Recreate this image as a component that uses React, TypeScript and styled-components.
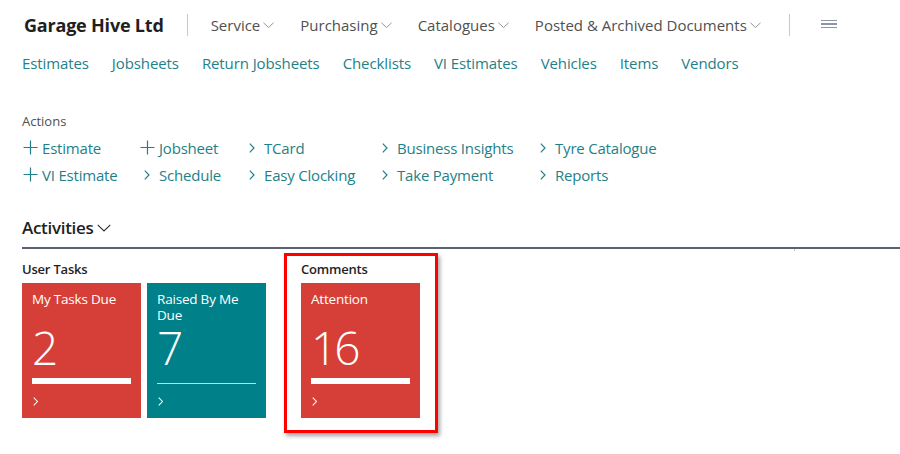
import React from "react";
import styled, { createGlobalStyle } from "styled-components";

const GlobalStyle = createGlobalStyle`
  html, body { margin: 0; padding: 0; background: #ffffff; }
  body { font-family: "Open Sans", "Noto Sans", "Liberation Sans", sans-serif; color: #212121; }
  * { box-sizing: border-box; }
`;

const TEAL = "#1e8189";
const RED_TILE = "#d63f37";
const TEAL_TILE = "#008089";

const Page = styled.div`
  width: 900px;
  height: 454px;
  overflow: hidden;
  padding-left: 22px;
`;

const TopBar = styled.header`
  height: 50px;
  display: flex;
  align-items: center;
`;

const Brand = styled.div`
  font-size: 18px;
  font-weight: 700;
  color: #1f1f1f;
  margin-left: 2px;
  letter-spacing: -0.2px;
`;

const VDivider = styled.div<{ $gapL: number; $gapR: number }>`
  width: 1px;
  height: 22px;
  background: #c9c9c9;
  margin-left: ${(p) => p.$gapL}px;
  margin-right: ${(p) => p.$gapR}px;
`;

const Menu = styled.nav`
  display: flex;
  align-items: center;
  gap: 26px;
`;

const MenuItem = styled.div`
  display: flex;
  align-items: center;
  gap: 3px;
  font-size: 15px;
  color: #505050;
`;

const Hamburger = styled.div`
  display: flex;
  flex-direction: column;
  gap: 2px;
  width: 16px;
  margin-top: -2px;
  span {
    display: block;
    height: 1.5px;
    background: #8c96a8;
  }
`;

const LinkRow = styled.nav`
  display: flex;
  gap: 23px;
  height: 26px;
  align-items: center;
`;

const Link = styled.a`
  font-size: 15px;
  color: ${TEAL};
  text-decoration: none;
  letter-spacing: -0.1px;
`;

const ActionsSection = styled.section`
  margin-top: 36px;
`;

const SmallLabel = styled.div`
  font-size: 13px;
  line-height: 18px;
  color: #505050;
`;

const ActionGrid = styled.div`
  margin-top: 4px;
  display: grid;
  grid-template-columns: 117px 105px 133px 158px auto;
  grid-auto-flow: column;
  grid-template-rows: 27px 27px;
`;

const Action = styled.a`
  display: flex;
  align-items: center;
  gap: 4px;
  font-size: 15px;
  color: ${TEAL};
  text-decoration: none;
  letter-spacing: -0.2px;
  white-space: nowrap;
`;

const IconBox = styled.span`
  width: 16px;
  display: inline-flex;
  justify-content: center;
  align-items: center;
`;

const ActivitiesHeader = styled.div`
  margin-top: 28px;
  display: flex;
  align-items: center;
  gap: 3px;
  font-size: 17px;
  line-height: 24px;
  font-weight: 600;
  color: #1f1f1f;
  height: 24px;
  letter-spacing: -0.3px;
`;

const Rule = styled.div`
  margin-top: 7px;
  height: 2px;
  background: #5b6373;
  position: relative;
`;

const Tick = styled.span`
  position: absolute;
  left: 772px;
  top: 2px;
  width: 1px;
  height: 2px;
  background: #c4c4c4;
`;

const GroupsRow = styled.div`
  display: flex;
  align-items: flex-start;
  padding-top: 11px;
  gap: 18px;
`;

const Group = styled.div``;

const GroupLabel = styled.div`
  font-size: 13px;
  font-weight: 600;
  line-height: 18px;
  color: #1f1f1f;
  margin-bottom: 5px;
  letter-spacing: -0.2px;
`;

const Tiles = styled.div`
  display: flex;
  gap: 6px;
`;

const Tile = styled.a<{ $bg: string }>`
  display: flex;
  flex-direction: column;
  width: 119px;
  height: 135px;
  background: ${(p) => p.$bg};
  color: #ffffff;
  padding: 8px 10px 0 10px;
  text-decoration: none;
`;

const TileTitle = styled.div`
  font-size: 13.5px;
  line-height: 16px;
  height: 32px;
  letter-spacing: -0.2px;
`;

const TileValue = styled.div`
  font-size: 46px;
  font-weight: 300;
  line-height: 46px;
  height: 48px;
  padding-top: 1px;
  letter-spacing: -3px;
`;

const Bar = styled.div<{ $filled: boolean }>`
  margin-top: 7px;
  height: 6px;
  display: flex;
  align-items: flex-end;
  &::after {
    content: "";
    display: block;
    width: 100%;
    height: ${(p) => (p.$filled ? "6px" : "1px")};
    background: ${(p) => (p.$filled ? "#ffffff" : "rgba(255,255,255,0.75)")};
  }
`;

const TileChevron = styled.div`
  margin-top: 13px;
  margin-left: 1px;
  height: 10px;
  display: flex;
`;

const Highlight = styled.div`
  margin-top: -7px;
  border: 3px solid #ff0000;
  padding: 4px 15px 12px 14px;
  box-shadow: 2px 3px 4px rgba(0, 0, 0, 0.35);
`;

const ChevronDown = ({ w = 11, color = "#8a8a8a" }: { w?: number; color?: string }) => (
  <svg width={w} height={w / 2 + 1} viewBox="0 0 12 7" fill="none">
    <path d="M0.5 0.8 L6 6 L11.5 0.8" stroke={color} strokeWidth="1" />
  </svg>
);

const ChevronRight = ({ color = TEAL, h = 10 }: { color?: string; h?: number }) => (
  <svg width={h * 0.6} height={h} viewBox="0 0 6 10" fill="none">
    <path d="M0.8 0.6 L5 5 L0.8 9.4" stroke={color} strokeWidth="1.2" />
  </svg>
);

const Plus = () => (
  <svg width="15" height="15" viewBox="0 0 15 15" fill="none">
    <path d="M7.5 0.5 V14.5 M0.5 7.5 H14.5" stroke={TEAL} strokeWidth="1.2" />
  </svg>
);

type ActionDef = { label: string; plus?: boolean };

const actions: ActionDef[] = [
  { label: "Estimate", plus: true },
  { label: "VI Estimate", plus: true },
  { label: "Jobsheet", plus: true },
  { label: "Schedule" },
  { label: "TCard" },
  { label: "Easy Clocking" },
  { label: "Business Insights" },
  { label: "Take Payment" },
  { label: "Tyre Catalogue" },
  { label: "Reports" },
];

type TileDef = { title: string; value: string; bg: string; filled: boolean };

const TileCard = ({ t }: { t: TileDef }) => (
  <Tile $bg={t.bg}>
    <TileTitle>{t.title}</TileTitle>
    <TileValue>{t.value}</TileValue>
    <Bar $filled={t.filled} />
    <TileChevron>
      <ChevronRight color="#ffffff" h={9} />
    </TileChevron>
  </Tile>
);

export default function App() {
  const menu = ["Service", "Purchasing", "Catalogues", "Posted & Archived Documents"];
  const links = ["Estimates", "Jobsheets", "Return Jobsheets", "Checklists", "VI Estimates", "Vehicles", "Items", "Vendors"];
  return (
    <>
      <GlobalStyle />
      <Page>
        <TopBar>
          <Brand>Garage Hive Ltd</Brand>
          <VDivider $gapL={23} $gapR={23} />
          <Menu>
            {menu.map((m) => (
              <MenuItem key={m}>
                {m}
                <ChevronDown />
              </MenuItem>
            ))}
          </Menu>
          <VDivider $gapL={28} $gapR={31} />
          <Hamburger>
            <span />
            <span />
            <span />
          </Hamburger>
        </TopBar>
        <LinkRow>
          {links.map((l) => (
            <Link key={l}>{l}</Link>
          ))}
        </LinkRow>
        <ActionsSection>
          <SmallLabel>Actions</SmallLabel>
          <ActionGrid>
            {actions.map((a) => (
              <Action key={a.label}>
                <IconBox>{a.plus ? <Plus /> : <ChevronRight />}</IconBox>
                {a.label}
              </Action>
            ))}
          </ActionGrid>
        </ActionsSection>
        <ActivitiesHeader>
          Activities
          <ChevronDown w={14} color="#333333" />
        </ActivitiesHeader>
        <Rule>
          <Tick />
        </Rule>
        <GroupsRow>
          <Group>
            <GroupLabel>User Tasks</GroupLabel>
            <Tiles>
              <TileCard t={{ title: "My Tasks Due", value: "2", bg: RED_TILE, filled: true }} />
              <TileCard t={{ title: "Raised By Me Due", value: "7", bg: TEAL_TILE, filled: false }} />
            </Tiles>
          </Group>
          <Highlight>
            <Group>
              <GroupLabel>Comments</GroupLabel>
              <Tiles>
                <TileCard t={{ title: "Attention", value: "16", bg: RED_TILE, filled: true }} />
              </Tiles>
            </Group>
          </Highlight>
        </GroupsRow>
      </Page>
    </>
  );
}
